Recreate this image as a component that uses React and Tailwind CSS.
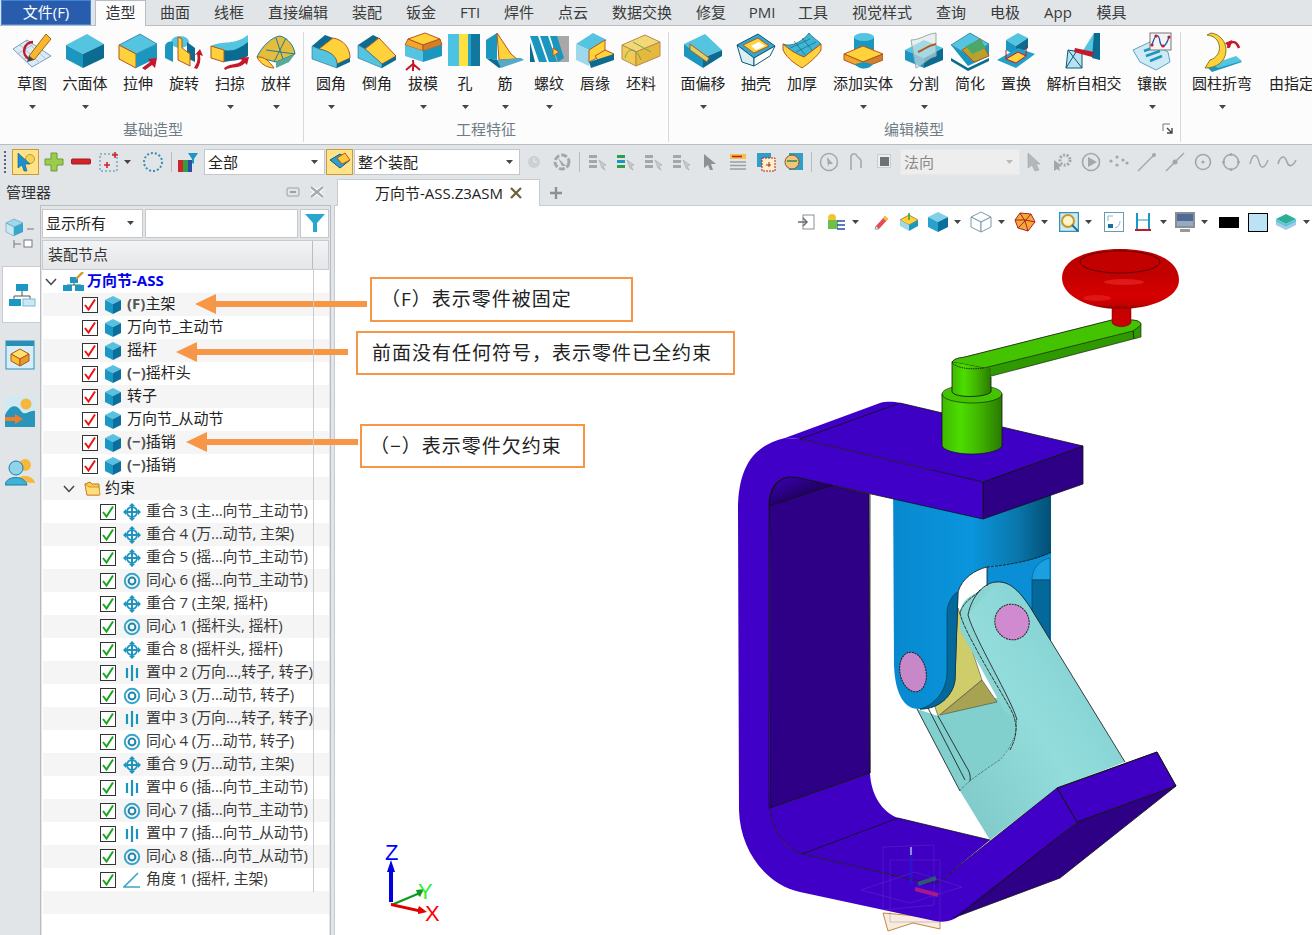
const C = { t: '#55c4e0', l: '#1b97bf', r: '#0b6b90', y: '#ffd23c', o: '#b5561c', e: '#0c5a78', red: '#c4182a' };

function Svg({ size = 40, children, className = '' }) {
  return (
    <svg viewBox={`0 0 ${size} ${size}`} width={size} height={size} className={`shrink-0 ${className}`}>
      {children}
    </svg>
  );
}

function Arrow({ d = 'M24 36 L32 30 L30 27 L39 26 L37 36 L34 33 L27 38 Z' }) {
  return <path d={d} fill={C.red} />;
}

const RIBBON_ICONS = {
  sketch: (
    <>
      <polygon points="1,17 15,8 39,24 20,35" fill="#dceaf5" stroke="#7b9db5" />
      <path d="M8 13 L28 31 M14 9 L34 27 M5 22 L22 12 M12 27 L30 17" stroke="#a9c2d4" fill="none" />
      <path d="M21 10 A9 9 0 0 0 17 27" stroke="#c4182a" strokeWidth="2.5" fill="none" />
      <polygon points="17,24 34,2 39,7 22,28" fill="#f9b62e" stroke="#a3650f" />
      <polygon points="17,24 22,28 15,30" fill="#444" />
    </>
  ),
  hex: (
    <>
      <polygon points="1,13 22,2 39,12 18,22" fill={C.t} />
      <polygon points="1,13 18,22 18,36 1,27" fill={C.l} />
      <polygon points="18,22 39,12 39,26 18,36" fill={C.r} />
    </>
  ),
  extrude: (
    <>
      <polygon points="1,13 22,2 39,12 18,22" fill={C.t} stroke={C.e} strokeWidth=".6" />
      <polygon points="1,13 18,22 18,36 1,27" fill={C.y} stroke={C.o} />
      <polygon points="18,22 39,12 39,26 18,36" fill={C.l} />
      <Arrow />
    </>
  ),
  revolve: (
    <>
      <ellipse cx="16" cy="10" rx="9" ry="6" fill={C.t} />
      <path d="M1 15 C1 9 8 9 9 10 L9 30 L1 26 Z" fill={C.l} />
      <path d="M23 10 L31 16 L31 30 L23 26 Z" fill={C.r} />
      <polygon points="14,5 18,7 18,16 26,22 26,34 14,28" fill={C.y} stroke={C.o} />
      <path d="M30 36 C34 30 34 26 33 22 L30 24 L36 17 L39 24 L36 23 C37 28 36 33 33 37 Z" fill={C.red} />
    </>
  ),
  sweep: (
    <>
      <path d="M1 14 C12 8 24 14 38 3 L38 17 C28 26 12 20 8 24 Z" fill={C.t} />
      <path d="M14 18 C24 20 30 16 38 10 L38 24 C28 30 22 28 14 30 Z" fill={C.r} />
      <polygon points="1,14 14,18 14,30 1,26" fill={C.y} stroke={C.o} />
      <path d="M14 36 C22 30 28 34 32 28 L29 26 L39 25 L37 33 L35 31 C30 37 22 34 15 38 Z" fill={C.red} />
    </>
  ),
  loft: (
    <>
      <path d="M1 25 C6 14 16 5 24 4 C32 6 38 14 39 22 L20 30 Z" fill="#e5bd3c" stroke="#1c7b9e" />
      <path d="M1 25 C8 24 14 30 18 36 C12 36 4 32 1 25 Z" fill={C.y} stroke={C.o} />
      <path d="M10 18 L39 22 M20 6 L28 30 M30 6 L18 30" stroke="#1c7b9e" fill="none" />
      <path d="M20 30 L39 22 L33 30 L20 36 Z" fill="#55aa9a" />
    </>
  ),
  fillet: (
    <>
      <path d="M1 14 L14 3 L22 6 L8 17 Z" fill={C.r} />
      <path d="M22 6 C33 8 39 16 39 26 L26 32 C26 24 18 19 8 17 Z" fill={C.y} stroke={C.o} />
      <path d="M1 14 L8 17 C18 19 26 24 26 32 L26 36 L1 27 Z" fill={C.t} stroke={C.e} strokeWidth=".5" />
      <polygon points="26,32 39,26 39,30 26,36" fill={C.r} />
    </>
  ),
  chamfer: (
    <>
      <polygon points="1,13 16,3 22,6 8,17" fill={C.r} />
      <polygon points="22,6 39,24 25,32 8,17" fill={C.y} stroke={C.o} />
      <polygon points="1,13 8,17 25,32 25,36 1,26" fill={C.t} stroke={C.e} strokeWidth=".5" />
      <polygon points="25,32 39,24 39,28 25,36" fill={C.r} />
    </>
  ),
  draft: (
    <>
      <polygon points="5,7 22,1 37,7 20,13" fill={C.y} stroke={C.o} />
      <polygon points="5,7 20,13 20,19 2,13" fill="#f0a52c" stroke={C.o} />
      <polygon points="20,13 37,7 39,13 20,19" fill="#d08028" stroke={C.o} />
      <polygon points="2,13 20,19 20,30 2,24" fill={C.t} />
      <polygon points="20,19 39,13 39,24 20,30" fill={C.l} />
      <path d="M10 39 L10 36 C11 32 10 30 10 28 M10 32 L3 38 M10 32 L17 38" stroke={C.red} strokeWidth="2" fill="none" />
    </>
  ),
  hole: (
    <>
      <rect x="3" y="2" width="32" height="32" rx="1" fill="#22a5d0" />
      <rect x="3" y="2" width="12" height="32" fill="#4cc3e2" />
      <rect x="14" y="2" width="9" height="32" fill="#ffe03c" />
      <rect x="26" y="2" width="9" height="32" fill="#13769c" />
    </>
  ),
  rib: (
    <>
      <polygon points="1,8 12,1 12,28 1,26" fill={C.l} />
      <polygon points="1,26 12,28 36,26 14,36" fill={C.r} />
      <polygon points="12,1 26,22 32,27 14,28" fill={C.y} stroke={C.o} />
      <polygon points="12,28 36,26 39,28 16,36" fill="#55aac8" />
    </>
  ),
  thread: (
    <>
      <rect x="24" y="4" width="16" height="26" fill="#a8a8a8" />
      <path d="M1 4 L9 4 L18 30 L10 30 Z M11 4 L19 4 L28 30 L20 30 Z M21 4 L28 4 L35 26 L29 30 Z" fill={C.l} />
      <path d="M1 10 L6 30 L1 30 Z" fill={C.r} />
      <polygon points="24,16 30,20 24,24" fill={C.y} stroke={C.o} />
    </>
  ),
  lip: (
    <>
      <polygon points="1,12 18,1 32,8 14,18" fill={C.t} />
      <polygon points="1,12 14,18 14,34 1,28" fill="#9ed8ea" />
      <polygon points="14,18 30,8 30,22 14,30" fill={C.y} stroke={C.o} />
      <polygon points="20,24 30,18 39,22 25,31" fill={C.y} stroke={C.o} />
      <polygon points="14,30 39,22 39,28 16,36" fill={C.r} />
    </>
  ),
  stock: (
    <>
      <polygon points="1,13 24,3 39,10 15,20" fill="#f3d975" stroke="#b58a52" />
      <polygon points="1,13 15,20 15,34 1,27" fill="#f0cc55" stroke="#b58a52" />
      <polygon points="15,20 39,10 39,24 15,34" fill="#e5b93e" stroke="#b58a52" />
      <path d="M4 26 C6 16 15 14 20 28 M12 10 L30 20" stroke="#6da35a" fill="none" />
    </>
  ),
  offset: (
    <>
      <polygon points="1,12 22,2 39,18 20,26" fill={C.t} />
      <polygon points="1,12 1,24 20,36 20,26" fill={C.l} />
      <polygon points="20,26 39,18 39,24 20,36" fill={C.r} />
      <polygon points="7,12 26,26 24,30 7,18" fill="#d5d36a" stroke={C.o} />
    </>
  ),
  shell: (
    <>
      <polygon points="1,13 22,2 39,14 18,26" fill="#35a7cd" stroke={C.e} />
      <polygon points="7,13 22,6 33,14 18,21" fill={C.y} stroke={C.o} />
      <polygon points="15,14 23,10 29,14 20,18" fill="#fff" />
      <polygon points="1,13 18,26 18,34 6,30" fill="#dbeef6" stroke={C.e} />
      <polygon points="18,26 39,14 34,24 18,34" fill="#fff" stroke={C.e} />
    </>
  ),
  thicken: (
    <>
      <path d="M1 12 C10 16 22 8 27 1 C30 5 34 7 39 12 L22 25 C14 22 8 18 1 12 Z" fill="#3fb5d4" stroke={C.e} strokeWidth=".7" />
      <path d="M8 16 L28 7 M14 20 L34 10 M12 9 L24 24 M20 6 L30 18" stroke={C.e} strokeWidth=".6" fill="none" />
      <path d="M1 12 L1 18 C6 28 14 32 20 36 C26 32 36 24 39 18 L39 12 L22 25 C14 22 8 18 1 12 Z" fill={C.y} stroke={C.o} />
    </>
  ),
  addSolid: (
    <>
      <rect x="11" y="5" width="20" height="14" fill={C.l} />
      <ellipse cx="21" cy="5" rx="10" ry="4" fill={C.t} />
      <polygon points="1,22 20,14 40,22 20,30" fill={C.y} stroke={C.o} />
      <polygon points="1,22 20,30 20,36 1,28" fill="#f0a52c" stroke={C.o} />
      <polygon points="20,30 40,22 40,28 20,36" fill="#d08028" stroke={C.o} />
      <path d="M12 32 C16 38 26 38 30 32 L20 30 Z" fill={C.l} />
    </>
  ),
  split: (
    <>
      <polygon points="1,18 20,8 39,16 20,26" fill={C.t} />
      <polygon points="1,18 20,26 20,36 1,28" fill={C.l} />
      <polygon points="20,26 39,16 39,28 20,36" fill={C.r} />
      <path d="M7 8 C16 8 22 2 32 1 L32 24 C24 26 20 32 12 36 Z" fill="#d8e6e6" fillOpacity=".6" stroke="#9aa" />
      <path d="M14 20 C20 18 22 14 32 12" stroke={C.o} strokeWidth="2" fill="none" />
    </>
  ),
  simplify: (
    <>
      <polygon points="1,13 20,1 39,12 20,24" fill={C.t} stroke={C.e} strokeWidth=".6" />
      <polygon points="1,13 18,34 39,24 39,12 20,24" fill={C.l} />
      <polygon points="12,18 30,7 39,24 24,30" fill="#b9a22c" stroke={C.o} />
      <polygon points="16,14 30,7 36,16 22,22" fill="#4aa86a" />
      <polygon points="1,26 18,36 39,26 39,29 18,39 1,29" fill={C.r} />
    </>
  ),
  replace: (
    <>
      <polygon points="10,8 22,1 32,6 20,14" fill={C.t} />
      <polygon points="10,8 20,14 20,24 10,18" fill={C.l} />
      <polygon points="20,14 32,6 32,16 20,24" fill={C.r} />
      <polygon points="1,28 22,16 39,22 20,36" fill="#22a0c8" />
      <polygon points="10,27 22,20 30,24 20,31" fill={C.y} stroke={C.red} />
      <path d="M10 18 V27 M30 14 V24" stroke={C.red} fill="none" />
    </>
  ),
  selfInt: (
    <>
      <polygon points="4,18 18,20 18,36 2,36" fill="#b8e2f0" stroke={C.e} />
      <polygon points="18,20 30,1 36,1 36,28 18,20" fill={C.t} />
      <polygon points="30,1 36,1 36,28 28,26" fill={C.r} />
      <path d="M2 36 L12 20 M4 18 L18 36" stroke={C.e} fill="none" />
      <polygon points="11,16 30,20 28,25 10,20" fill={C.red} />
    </>
  ),
  inlay: (
    <>
      <path d="M1 18 L18 10 L36 20 L38 30 L24 38 L8 30 Z" fill="#cdeaf6" stroke="#5fa3c0" />
      <path d="M12 19 L26 14 M14 24 L28 19 M18 29 L30 24" stroke={C.l} strokeWidth="2.5" fill="none" />
      <rect x="18" y="1" width="21" height="17" fill="#f4f4f4" stroke="#777" />
      <path d="M20 13 C24 -1 27 3 28 10 C30 18 34 14 37 5" stroke="#2a4ea8" strokeWidth="1.3" fill="none" />
      <circle cx="20" cy="13" r="1.6" fill={C.red} /><circle cx="24" cy="4" r="1.6" fill={C.red} /><circle cx="31" cy="14" r="1.6" fill={C.red} /><circle cx="37" cy="5" r="1.6" fill={C.red} />
    </>
  ),
  bend: (
    <>
      <polygon points="6,36 34,26 40,30 10,40" fill={C.l} />
      <polygon points="10,32 34,24 40,29 16,36" fill={C.t} />
      <path d="M5 3 C20 4 22 24 8 28 L3 36 C14 36 24 30 24 18 C24 10 18 2 9 1 Z" fill={C.y} stroke="#8a7a1c" />
      <path d="M26 16 C28 8 34 8 37 16" stroke={C.red} strokeWidth="2.5" fill="none" />
      <polygon points="23,11 30,8 28,16" fill={C.red} />
    </>
  ),
};

const RIBBON = [
  {
    label: '基础造型', cls: 'pl-[9px] pr-[4px]', labelCls: 'pr-[2px]',
    items: [
      ['草图', 'sketch', 'w-[46px]', true], ['六面体', 'hex', 'w-[60px]', true], ['拉伸', 'extrude', 'w-[46px]'],
      ['旋转', 'revolve', 'w-[46px]'], ['扫掠', 'sweep', 'w-[46px]', true], ['放样', 'loft', 'w-[46px]', true],
    ],
  },
  {
    label: '工程特征', cls: 'pl-[4px] pr-[4px]', labelCls: '',
    items: [
      ['圆角', 'fillet', 'w-[46px]', true], ['倒角', 'chamfer', 'w-[46px]'], ['拔模', 'draft', 'w-[46px]', true],
      ['孔', 'hole', 'w-[38px]', true], ['筋', 'rib', 'w-[42px]', true], ['螺纹', 'thread', 'w-[46px]', true],
      ['唇缘', 'lip', 'w-[46px]'], ['坯料', 'stock', 'w-[46px]'],
    ],
  },
  {
    label: '编辑模型', cls: 'pl-[4px] pr-[5px]', labelCls: 'pr-[20px]', launcher: true,
    items: [
      ['面偏移', 'offset', 'w-[60px]', true], ['抽壳', 'shell', 'w-[46px]'], ['加厚', 'thicken', 'w-[46px]'],
      ['添加实体', 'addSolid', 'w-[76px]', true], ['分割', 'split', 'w-[46px]', true], ['简化', 'simplify', 'w-[46px]'],
      ['置换', 'replace', 'w-[46px]'], ['解析自相交', 'selfInt', 'w-[90px]'], ['镶嵌', 'inlay', 'w-[46px]', true],
    ],
  },
];

const TABS = [
  ['曲面', 'w-[54px]'], ['线框', 'w-[54px]'], ['直接编辑', 'w-[84px]'], ['装配', 'w-[54px]'], ['钣金', 'w-[54px]'],
  ['FTI', 'w-[44px]'], ['焊件', 'w-[54px]'], ['点云', 'w-[54px]'], ['数据交换', 'w-[84px]'], ['修复', 'w-[54px]'],
  ['PMI', 'w-[48px]'], ['工具', 'w-[54px]'], ['视觉样式', 'w-[84px]'], ['查询', 'w-[54px]'], ['电极', 'w-[54px]'],
  ['App', 'w-[52px]'], ['模具', 'w-[55px]'],
];

function Caret({ className = '' }) {
  return (
    <svg width="7" height="4" viewBox="0 0 7 4" className={`shrink-0 ${className}`}>
      <polygon points="0,0 7,0 3.5,4" fill="#454545" />
    </svg>
  );
}

function RibbonItem({ label, icon, w, caret }) {
  return (
    <div className={`${w} shrink-0 flex flex-col items-center pt-[6px]`}>
      <Svg>{RIBBON_ICONS[icon]}</Svg>
      <div className="mt-[1px] h-[20px] leading-[20px] whitespace-nowrap">{label}</div>
      {caret && <Caret className="mt-[12px]" />}
    </div>
  );
}

function Sep() {
  return <div className="w-px shrink-0 bg-[#d6d9db] mt-[6px] mb-[2px]" />;
}

function RibbonGroup({ group }) {
  return (
    <div className={`${group.cls} flex flex-col shrink-0`}>
      <div className="flex h-[92px]">
        {group.items.map(([l, ic, w, c]) => <RibbonItem key={l} label={l} icon={ic} w={w} caret={c} />)}
      </div>
      <div className={`${group.labelCls} relative h-[22px] leading-[22px] text-center text-[#6f7c86]`}>
        {group.label}
        {group.launcher && (
          <svg width="11" height="11" viewBox="0 0 11 11" className="absolute right-[2px] top-[5px]">
            <path d="M1 1 H8 M1 1 V8" stroke="#777" fill="none" />
            <path d="M5 5 L10 10 M10 5 V10 H5" stroke="#444" strokeWidth="1.4" fill="none" />
          </svg>
        )}
      </div>
    </div>
  );
}

function Tool({ children, className = '' }) {
  return <div className={`w-7 h-7 shrink-0 flex items-center justify-center ${className}`}>{children}</div>;
}

const gray = '#a3a7aa';

function GrayStack({ color = gray, arrow = '#c8cbcd' }) {
  return (
    <svg width="20" height="18" viewBox="0 0 20 18">
      <rect x="1" y="2" width="8" height="3" fill={color} /><rect x="1" y="7" width="8" height="3" fill={color === gray ? gray : '#1b97bf'} /><rect x="1" y="12" width="8" height="3" fill={color} />
      <path d="M11 7 L18 12 L15 13 L17 17 L14 15 Z" fill={arrow} stroke="#999" strokeWidth=".5" />
    </svg>
  );
}

function Combo({ text, w, disabled }) {
  return (
    <div className={`${w} h-[26px] shrink-0 border flex items-center pl-[3px] pr-[6px] ${disabled ? 'bg-[#eeeeee] border-[#e6e8ea] text-[#8a8a8a]' : 'bg-white border-[#c4c8cb]'}`}>
      <span className="flex-1 leading-[20px] pt-[1px]">{text}</span>
      <Caret className={disabled ? 'opacity-30' : ''} />
    </div>
  );
}

function ToolbarRow() {
  return (
    <div className="h-[33px] bg-[#e1e5e8] flex items-center pl-[4px] shrink-0">
      <div className="w-[3px] h-[22px] border-l-2 border-dotted border-[#56627a] mr-[5px]" />
      <div className="w-[27px] h-[26px] bg-[#ffe28a] border border-[#c89a3a] flex items-center justify-center">
        <svg width="20" height="20" viewBox="0 0 20 20">
          <circle cx="14" cy="7" r="4.5" fill="#f6d35a" stroke="#c09a2a" />
          <path d="M2 1 L14 12 L9 12 L11 19 L8 19 L6 13 L2 16 Z" fill="#1b8fd0" stroke="#0b5f8f" strokeWidth=".6" />
        </svg>
      </div>
      <Tool className="ml-[1px]">
        <svg width="20" height="20" viewBox="0 0 20 20"><path d="M7 1 H13 V7 H19 V13 H13 V19 H7 V13 H1 V7 H7 Z" fill="#9ccc4c" stroke="#6c9a30" /></svg>
      </Tool>
      <Tool className="-ml-[1px]">
        <svg width="20" height="8" viewBox="0 0 20 8"><rect x=".5" y="1" width="19" height="5" rx="1" fill="#d2232a" stroke="#a01a20" /></svg>
      </Tool>
      <Tool>
        <svg width="22" height="22" viewBox="0 0 22 22">
          <rect x="2" y="3" width="17" height="17" fill="none" stroke="#3a8fb0" strokeDasharray="2 2" />
          <path d="M9 11 V17 M6 14 H12 M17 1 V7 M14 4 H20" stroke="#d2232a" strokeWidth="1.6" />
        </svg>
      </Tool>
      <Caret className="ml-[1px]" />
      <Tool className="ml-[8px]">
        <svg width="22" height="22" viewBox="0 0 22 22"><circle cx="11" cy="11" r="9" fill="none" stroke="#3a8fb0" strokeWidth="2" strokeDasharray="2 2" /></svg>
      </Tool>
      <div className="w-px h-[20px] bg-[#b8bcc0] ml-[4px] mr-[2px]" />
      <Tool>
        <svg width="22" height="22" viewBox="0 0 22 22">
          <rect x="1" y="9" width="5" height="12" fill="#d2232a" /><rect x="6" y="9" width="5" height="12" fill="#2f9e44" /><rect x="11" y="9" width="4" height="12" fill="#2a4ea8" />
          <path d="M11 2 H21 L17 8 V13 L15 12 V8 Z" fill="#1b97c4" />
        </svg>
      </Tool>
      <Combo text="全部" w="w-[121px] ml-[2px]" />
      <div className="w-[27px] h-[26px] ml-[1px] bg-[#ffe28a] border border-[#c89a3a] flex items-center justify-center">
        <svg width="22" height="20" viewBox="0 0 22 20">
          <polygon points="1,8 11,2 21,8 11,16" fill="#2f9fc8" stroke="#0b5f8f" />
          <polygon points="8,6 16,1 21,8 13,12" fill="#ffc93c" stroke="#b5561c" />
        </svg>
      </div>
      <Combo text="整个装配" w="w-[166px] ml-[1px]" />
      <Tool>
        <svg width="14" height="14" viewBox="0 0 14 14"><circle cx="7" cy="7" r="6" fill="#cdd0d2" /><path d="M7 3 V7 H10" stroke="#eee" fill="none" /></svg>
      </Tool>
      <Tool>
        <svg width="20" height="20" viewBox="0 0 20 20"><circle cx="10" cy="10" r="7" fill="none" stroke={gray} strokeWidth="3" strokeDasharray="6 2" /><path d="M6 6 L14 14 L10 14" fill={gray} /></svg>
      </Tool>
      <div className="w-px h-[20px] bg-[#b8bcc0] ml-[3px] mr-[4px]" />
      <Tool><GrayStack /></Tool>
      <Tool><GrayStack color="#2f9e44" /></Tool>
      <Tool><GrayStack /></Tool>
      <Tool><GrayStack /></Tool>
      <Tool>
        <svg width="14" height="18" viewBox="0 0 14 18"><path d="M1 1 L13 11 L8 11 L10 17 L7 17 L5 12 L1 15 Z" fill="#8d9194" /></svg>
      </Tool>
      <Tool>
        <svg width="18" height="18" viewBox="0 0 18 18"><rect x="1" y="1" width="16" height="5" fill="#f2c04c" /><path d="M3 3.5 H13" stroke="#c4182a" strokeWidth="1.6" /><path d="M1 9 H17 M1 12.5 H17 M1 16 H17" stroke="#9a9fa3" strokeWidth="1.5" /></svg>
      </Tool>
      <Tool>
        <svg width="20" height="20" viewBox="0 0 20 20"><rect x="1" y="1" width="14" height="14" fill="#2f9fc8" /><rect x="6" y="6" width="13" height="13" fill="#fdf2c8" stroke="#c4182a" strokeDasharray="2 1" /><path d="M10 13 H15 M13 10 V15" stroke="#c4182a" /></svg>
      </Tool>
      <Tool>
        <svg width="20" height="20" viewBox="0 0 20 20"><rect x="5" y="1" width="14" height="17" fill="#2f9fc8" /><circle cx="8" cy="10" r="7" fill="#f2c481" stroke="#8a5a20" /><path d="M3 9 H13" stroke="#5a9a4a" strokeWidth="2" /></svg>
      </Tool>
      <div className="w-px h-[20px] bg-[#b8bcc0] ml-[3px] mr-[3px]" />
      <Tool>
        <svg width="20" height="20" viewBox="0 0 20 20"><circle cx="10" cy="10" r="8.5" fill="none" stroke={gray} strokeWidth="1.5" /><path d="M8 5 L14 12 L10 12 L9 15 Z" fill={gray} /></svg>
      </Tool>
      <Tool className="-ml-[1px]">
        <svg width="14" height="20" viewBox="0 0 14 20"><path d="M2 18 V5 C2 1 7 1 8 4 C9 6 12 6 12 9 V16" fill="none" stroke={gray} strokeWidth="1.5" /></svg>
      </Tool>
      <Tool className="ml-[1px]">
        <svg width="16" height="16" viewBox="0 0 16 16"><rect x=".5" y=".5" width="13" height="13" fill="#eee" stroke="#ccc" /><rect x="3" y="3" width="9" height="9" fill="#6e7275" /></svg>
      </Tool>
      <Combo text="法向" w="w-[120px] ml-[1px]" disabled />
      <Tool className="ml-[1px]">
        <svg width="16" height="20" viewBox="0 0 16 20"><path d="M1 1 L13 12 L9 12 L12 18 L8 19 L5 13 L1 16 Z" fill="#b4b8bb" stroke="#999" strokeWidth=".5" /></svg>
      </Tool>
      <Tool>
        <svg width="20" height="20" viewBox="0 0 20 20"><circle cx="12" cy="8" r="5" fill="none" stroke={gray} strokeWidth="3" strokeDasharray="2 1.5" /><path d="M1 8 L9 14 L6 15 L7 19 L4 17 L1 19 Z" fill={gray} /></svg>
      </Tool>
      <Tool>
        <svg width="20" height="20" viewBox="0 0 20 20"><circle cx="10" cy="10" r="8.5" fill="none" stroke={gray} strokeWidth="1.6" /><path d="M7 5 L16 10 L7 15 Z" fill={gray} /></svg>
      </Tool>
      <Tool>
        <svg width="20" height="14" viewBox="0 0 20 14" fill={gray}><circle cx="2" cy="6" r="1.6" /><circle cx="8" cy="2" r="1.6" /><circle cx="8" cy="10" r="1.6" /><circle cx="14" cy="5" r="1.6" /><circle cx="18" cy="8" r="1.6" /></svg>
      </Tool>
      <Tool>
        <svg width="20" height="20" viewBox="0 0 20 20"><path d="M1 19 L17 3" stroke={gray} strokeWidth="1.5" /><circle cx="17" cy="3" r="2" fill={gray} /></svg>
      </Tool>
      <Tool>
        <svg width="20" height="20" viewBox="0 0 20 20"><path d="M1 19 L19 1" stroke={gray} strokeWidth="1.5" /><circle cx="10" cy="10" r="2.5" fill={gray} /></svg>
      </Tool>
      <Tool>
        <svg width="18" height="18" viewBox="0 0 18 18"><circle cx="9" cy="9" r="7.5" fill="none" stroke={gray} strokeWidth="1.6" /><circle cx="9" cy="9" r="1.6" fill={gray} /></svg>
      </Tool>
      <Tool>
        <svg width="20" height="20" viewBox="0 0 20 20"><circle cx="10" cy="10" r="7.5" fill="none" stroke={gray} strokeWidth="1.6" /><g fill={gray}><circle cx="10" cy="2.5" r="1.5" /><circle cx="10" cy="17.5" r="1.5" /><circle cx="2.5" cy="10" r="1.5" /><circle cx="17.5" cy="10" r="1.5" /></g></svg>
      </Tool>
      <Tool>
        <svg width="20" height="20" viewBox="0 0 20 20"><path d="M1 12 C4 0 8 2 10 10 C12 18 16 16 19 8" fill="none" stroke={gray} strokeWidth="1.4" /></svg>
      </Tool>
      <Tool>
        <svg width="20" height="16" viewBox="0 0 20 16"><path d="M1 10 C4 0 8 2 10 8 C12 14 16 12 19 6" fill="none" stroke={gray} strokeWidth="1.6" /></svg>
      </Tool>
    </div>
  );
}

function MiniCube() {
  return (
    <svg width="18" height="18" viewBox="0 0 18 18" className="shrink-0">
      <polygon points="9,0 17,4 9,8 1,4" fill="#58c0e0" />
      <polygon points="1,4 9,8 9,18 1,14" fill="#1b97c4" />
      <polygon points="9,8 17,4 17,14 9,18" fill="#0b6f9e" />
    </svg>
  );
}

function Check({ color }) {
  return (
    <div className="w-4 h-4 shrink-0 border border-[#333] bg-white flex items-center justify-center">
      <svg width="14" height="14" viewBox="0 0 14 14">
        <path d="M2 7 L5.5 11.5 L12 1.5" fill="none" stroke={color} strokeWidth="2" />
      </svg>
    </div>
  );
}

const CONSTRAINT_ICONS = {
  coincide: (
    <>
      <circle cx="9" cy="9" r="5" fill="none" stroke="#1d94bd" strokeWidth="2" />
      <path d="M9 1 V17 M1 9 H17" stroke="#1d94bd" strokeWidth="2" />
      <path d="M9 0 L12 3 H6 Z M9 18 L12 15 H6 Z M0 9 L3 6 V12 Z M18 9 L15 6 V12 Z" fill="#1d94bd" />
    </>
  ),
  concentric: (
    <>
      <circle cx="9" cy="9" r="7.2" fill="none" stroke="#34a4c8" strokeWidth="2" />
      <circle cx="9" cy="9" r="3.4" fill="none" stroke="#1d84ad" strokeWidth="2" />
    </>
  ),
  center: <path d="M4 4 V14 M9 1 V17 M14 4 V14" stroke="#1d94bd" strokeWidth="2.2" />,
  angle: <path d="M15 2 L1 16 H17" fill="none" stroke="#3aa6c8" strokeWidth="1.6" />,
};

function ConstraintIcon({ type }) {
  return <svg width="18" height="18" viewBox="0 0 18 18" className="shrink-0">{CONSTRAINT_ICONS[type]}</svg>;
}

const PARTS = [
  ['(F)', '主架'], ['', '万向节_主动节'], ['', '摇杆'], ['(−)', '摇杆头'], ['', '转子'],
  ['', '万向节_从动节'], ['(−)', '插销'], ['(−)', '插销'],
];

const CONSTRAINTS = [
  ['coincide', '重合 3 (主...向节_主动节)'], ['coincide', '重合 4 (万...动节, 主架)'], ['coincide', '重合 5 (摇...向节_主动节)'],
  ['concentric', '同心 6 (摇...向节_主动节)'], ['coincide', '重合 7 (主架, 摇杆)'], ['concentric', '同心 1 (摇杆头, 摇杆)'],
  ['coincide', '重合 8 (摇杆头, 摇杆)'], ['center', '置中 2 (万向...,转子, 转子)'], ['concentric', '同心 3 (万...动节, 转子)'],
  ['center', '置中 3 (万向...,转子, 转子)'], ['concentric', '同心 4 (万...动节, 转子)'], ['coincide', '重合 9 (万...动节, 主架)'],
  ['center', '置中 6 (插...向节_主动节)'], ['concentric', '同心 7 (插...向节_主动节)'], ['center', '置中 7 (插...向节_从动节)'],
  ['concentric', '同心 8 (插...向节_从动节)'], ['angle', '角度 1 (摇杆, 主架)'],
];

function Row({ index, children }) {
  return (
    <div className={`h-[23px] flex items-center leading-[23px] whitespace-nowrap ${index % 2 === 1 ? 'bg-[#f5f5f5]' : 'bg-white'}`}>
      {children}
    </div>
  );
}

function Chevron({ className = '' }) {
  return (
    <svg width="12" height="8" viewBox="0 0 12 8" className={`shrink-0 ${className}`}>
      <path d="M1 1 L6 6.5 L11 1" fill="none" stroke="#444" strokeWidth="1.5" />
    </svg>
  );
}

function Tree() {
  return (
    <div className="relative flex-1 ml-[1px]">
      <div className="absolute left-[270px] top-0 h-[622px] w-px bg-[#c8ccd0] z-10" />
      <Row index={0}>
        <Chevron className="ml-[2px]" />
        <svg width="22" height="20" viewBox="0 0 22 20" className="ml-[6px] shrink-0">
          <rect x="7" y="5" width="8" height="6" fill="#1b97c4" /><path d="M11 11 V13 M4 13 H18" stroke="#555" fill="none" />
          <rect x="0" y="13" width="9" height="6" fill="#1b97c4" /><rect x="12" y="13" width="9" height="6" fill="#1b97c4" />
          <path d="M13 7 L20 0" stroke="#d09a2a" strokeWidth="2.4" />
        </svg>
        <span className="ml-[2px] pb-[2px] font-bold text-[#0000ee]">万向节-ASS</span>
      </Row>
      {PARTS.map(([prefix, name], i) => (
        <Row key={i} index={i + 1}>
          <div className="ml-[39px]"><Check color="#ee1111" /></div>
          <div className="ml-[6px]"><MiniCube /></div>
          <span className="ml-[5px] pb-[2px]">
            {prefix && <b className="text-[#555]">{prefix}</b>}{name}
          </span>
        </Row>
      ))}
      <Row index={9}>
        <Chevron className="ml-[20px]" />
        <svg width="17" height="15" viewBox="0 0 17 15" className="ml-[9px] shrink-0">
          <path d="M1 3 L6 1 L8 3 H15 V14 H3 Z" fill="#f9c94c" stroke="#c07a1c" />
          <path d="M1 3 L3 14 L16 14 L15 6 H5 Z" fill="#ffdd7a" stroke="#c07a1c" strokeWidth=".7" />
        </svg>
        <span className="ml-[4px] pb-[2px]">约束</span>
      </Row>
      {CONSTRAINTS.map(([type, text], i) => (
        <Row key={text} index={i + 10}>
          <div className="ml-[57px]"><Check color="#16a51f" /></div>
          <div className="ml-[7px]"><ConstraintIcon type={type} /></div>
          <span className="ml-[5px] pb-[2px] tracking-[-0.1px] text-[#3a3a3a]">{text}</span>
        </Row>
      ))}
      <Row index={27} />
    </div>
  );
}

function SideIcons() {
  return (
    <div className="w-[40px] shrink-0 bg-[#e1e5e8] flex flex-col items-center pt-[13px]">
      <svg width="30" height="32" viewBox="0 0 30 32">
        <polygon points="9,1 18,5 9,9 1,5" fill="#9fd8ec" stroke="#3a8fb0" strokeWidth=".5" />
        <polygon points="1,5 9,9 9,18 1,14" fill="#c8e8f4" stroke="#3a8fb0" strokeWidth=".5" />
        <polygon points="9,9 18,5 18,14 9,18" fill="#3aa6cc" />
        <path d="M22 11 H29 M9 22 V30 M9 26 H16" stroke="#777" />
        <rect x="19" y="22" width="8" height="7" fill="#fff" stroke="#777" />
      </svg>
      <div className="self-start ml-[2px] mt-[16px] w-[39px] h-[57px] bg-white border border-r-0 border-[#c8ccd0] flex items-center justify-center">
        <svg width="28" height="24" viewBox="0 0 28 24">
          <rect x="8" y="1" width="12" height="7" fill="#1b97c4" /><path d="M14 8 V13 M6 13 H22 M6 13 V16 M22 13 V16" stroke="#555" fill="none" />
          <rect x="1" y="16" width="12" height="7" fill="#1b97c4" /><rect x="15" y="16" width="12" height="7" fill="#cde8f4" stroke="#7fb8d0" />
        </svg>
      </div>
      <svg width="30" height="30" viewBox="0 0 30 30" className="mt-[17px]">
        <rect x="1" y="1" width="28" height="28" fill="#d6eefa" stroke="#2a8fb8" />
        <rect x="1" y="1" width="28" height="5" fill="#2a8fb8" />
        <polygon points="6,14 15,9 24,14 15,19" fill="#ffe06a" stroke="#b5561c" />
        <polygon points="6,14 15,19 15,26 6,21" fill="#f8c030" stroke="#b5561c" />
        <polygon points="15,19 24,14 24,21 15,26" fill="#e89a28" stroke="#b5561c" />
      </svg>
      <svg width="30" height="30" viewBox="0 0 30 30" className="mt-[27px]">
        <rect x="0" y="0" width="30" height="30" fill="#cfeaf4" />
        <path d="M0 18 C6 6 12 8 16 14 C20 20 25 12 30 14 V30 H0 Z" fill="#2a95bb" />
        <circle cx="21" cy="7" r="5.5" fill="#f6b73c" />
        <path d="M0 20 H10 V17 L18 22 L10 27 V24 H0 Z" fill="#ef7d2e" />
      </svg>
      <svg width="30" height="28" viewBox="0 0 30 28" className="mt-[31px]">
        <circle cx="20" cy="7" r="6" fill="#f6b73c" /><path d="M12 24 C12 16 28 16 30 25 Z" fill="#f6b73c" />
        <circle cx="11" cy="10" r="7" fill="#8fd4ea" stroke="#1b7fa6" />
        <path d="M0 27 C1 17 20 17 22 27 Z" fill="#3fb2d6" stroke="#1b7fa6" />
      </svg>
    </div>
  );
}

function ManagerPanel() {
  return (
    <div className="w-[335px] shrink-0 flex flex-col">
      <div className="h-[27px] flex items-center pl-[6px] bg-[#e1e5e8]">
        <span className="leading-[20px] text-[#333]">管理器</span>
        <svg width="14" height="10" viewBox="0 0 14 10" className="ml-[235px]">
          <rect x="1" y="1" width="12" height="8" rx="1" fill="none" stroke="#9aa0a5" /><rect x="4" y="4" width="6" height="2" fill="#9aa0a5" />
        </svg>
        <svg width="16" height="12" viewBox="0 0 16 12" className="ml-[9px]">
          <path d="M2 1 L14 11 M14 1 L2 11" stroke="#fff" strokeWidth="4.5" /><path d="M2 1 L14 11 M14 1 L2 11" stroke="#a8adb1" strokeWidth="2.4" />
        </svg>
      </div>
      <div className="flex flex-1 min-h-0">
        <SideIcons />
        <div className="w-[291px] shrink-0 border-x border-t border-[#b9bdc1] bg-[#e1e5e8] flex flex-col">
          <div className="h-[34px] shrink-0 flex items-center gap-[2px] pl-[1px] pr-[1px] pb-[1px] pt-[1px]">
            <div className="w-[101px] h-[29px] bg-white border border-[#c4c8cb] flex items-center pl-[3px] pr-[8px]">
              <span className="flex-1 leading-[20px]">显示所有</span>
              <Caret />
            </div>
            <div className="w-[153px] h-[29px] bg-white border border-[#c4c8cb]" />
            <div className="w-[29px] h-[29px] bg-white border border-[#c4c8cb] flex items-center justify-center">
              <svg width="20" height="20" viewBox="0 0 20 20"><path d="M0 1 H20 L12 10 V19 H8 V10 Z" fill="#27a7d0" /></svg>
            </div>
          </div>
          <div className="h-[30px] shrink-0 mx-[1px] flex border border-[#c8ccd0] bg-gradient-to-b from-[#f2f3f4] to-[#e4e6e8]">
            <div className="w-[270px] pl-[5px] border-r border-[#b9bdc1] leading-[26px] text-[#333]">装配节点</div>
          </div>
          <div className="flex flex-col flex-1 mr-[1px] bg-white ml-[1px]">
            <Tree />
          </div>
        </div>
        <div className="w-[4px] bg-[#e1e5e8] border-r border-[#c8ccd0]" />
      </div>
    </div>
  );
}

function ViewTools() {
  return (
    <div className="absolute left-[457px] top-[2px] flex items-center">
      <Tool>
        <svg width="18" height="18" viewBox="0 0 18 18"><rect x="6" y="2" width="11" height="14" fill="#fff" stroke="#8a8f93" /><path d="M1 9 H10 M6 5 L10 9 L6 13" stroke="#6a6f73" strokeWidth="1.5" fill="none" /></svg>
      </Tool>
      <Tool className="ml-[2px]">
        <svg width="20" height="20" viewBox="0 0 20 20"><circle cx="6" cy="6" r="4" fill="#f4c430" /><rect x="2" y="8" width="10" height="9" fill="#6ebf4a" /><path d="M11 9 H19 M11 13 H19 M11 17 H19" stroke="#2a4ea8" strokeWidth="1.5" /></svg>
      </Tool>
      <Caret className="ml-[2px]" />
      <Tool className="ml-[8px]">
        <svg width="16" height="16" viewBox="0 0 16 16"><path d="M3 12 L12 2 L15 5 L6 15 Z" fill="#e84a5a" /><path d="M3 12 L6 15 L2 15 Z" fill="#eee" stroke="#999" /><path d="M12 2 L15 5 L13 7 L10 4 Z" fill="#f4c430" /></svg>
      </Tool>
      <Tool>
        <svg width="20" height="20" viewBox="0 0 20 20"><polygon points="1,8 10,3 19,8 10,13" fill="#ffd23c" stroke="#b58a1c" /><polygon points="1,8 10,13 10,19 1,14" fill="#9ed8ea" /><polygon points="10,13 19,8 19,14 10,19" fill="#1b97c4" /><path d="M10 8 V1" stroke="#2f9e44" strokeWidth="1.5" /></svg>
      </Tool>
      <Tool className="ml-[1px]">
        <svg width="22" height="22" viewBox="0 0 22 22"><polygon points="1,6 11,1 21,6 11,11" fill="#7fd0e8" /><polygon points="1,6 11,11 11,21 1,16" fill="#2aa0cc" /><polygon points="11,11 21,6 21,16 11,21" fill="#0b6f9e" /></svg>
      </Tool>
      <Caret className="ml-[2px]" />
      <Tool className="ml-[6px]">
        <svg width="22" height="22" viewBox="0 0 22 22" fill="#fff" stroke="#7a9aae"><polygon points="1,6 11,1 21,6 11,11" /><polygon points="1,6 11,11 11,21 1,16" /><polygon points="11,11 21,6 21,16 11,21" /></svg>
      </Tool>
      <Caret className="ml-[3px]" />
      <Tool className="ml-[6px]">
        <svg width="22" height="20" viewBox="0 0 22 20"><polygon points="6,1 17,2 21,10 14,19 4,16 1,8" fill="#f2a93c" stroke="#b02020" /><path d="M6 1 L11 9 L17 2 M1 8 H11 L21 10 M11 9 L4 16 M11 9 L14 19" stroke="#b02020" fill="none" /></svg>
      </Tool>
      <Caret className="ml-[2px]" />
      <Tool className="ml-[7px]">
        <svg width="20" height="20" viewBox="0 0 20 20"><rect x=".5" y=".5" width="19" height="19" fill="#cfeaf4" stroke="#2a95bb" strokeWidth="1.5" /><circle cx="9" cy="9" r="6" fill="#fff3c8" stroke="#c09a2a" strokeWidth="2" /><path d="M13 13 L19 19" stroke="#2a6a8a" strokeWidth="2" /></svg>
      </Tool>
      <Caret className="ml-[2px]" />
      <Tool className="ml-[8px]">
        <svg width="20" height="20" viewBox="0 0 20 20"><rect x=".5" y=".5" width="19" height="19" fill="#fff" stroke="#6a9ab0" /><rect x="4" y="12" width="5" height="4" fill="#1b6f9e" /><path d="M4 9 V4 H9 M16 9 C16 13 14 15 11 16" stroke="#8ab8cc" fill="none" /></svg>
      </Tool>
      <Tool className="ml-[2px]">
        <svg width="20" height="20" viewBox="0 0 20 20"><path d="M3 1 V19 M15 1 V19" stroke="#1b97c4" strokeWidth="2" /><path d="M4 8 H14" stroke="#1b97c4" /><path d="M1 18 H17" stroke="#c4182a" strokeWidth="2" /></svg>
      </Tool>
      <Caret className="ml-[2px]" />
      <Tool className="ml-[4px]">
        <svg width="22" height="22" viewBox="0 0 22 22"><rect x="1" y="1" width="20" height="16" fill="#8a8f93" /><rect x="3" y="3" width="16" height="12" fill="#4f6a94" /><path d="M3 10 H19 V15 H3 Z" fill="#98a8c0" /><rect x="6" y="18" width="10" height="3" fill="#999" /></svg>
      </Tool>
      <Caret className="ml-[2px]" />
      <Tool className="ml-[7px]"><div className="w-5 h-[11px] bg-black" /></Tool>
      <Tool className="ml-[1px]"><div className="w-5 h-[19px] bg-[#bce3f5] border border-black" /></Tool>
      <Tool>
        <svg width="22" height="18" viewBox="0 0 22 18"><polygon points="1,9 11,14 21,9 21,12 11,17 1,12" fill="#a8c8e8" /><polygon points="1,6 11,11 21,6 11,1" fill="#2fae96" /><polygon points="1,6 11,11 21,6 21,9 11,14 1,9" fill="#62c3dc" /></svg>
      </Tool>
      <Caret className="ml-[3px]" />
    </div>
  );
}

function Model() {
  const edge = { stroke: '#111', strokeWidth: 0.8, fill: 'none' };
  return (
    <svg viewBox="335 206 977 729" className="absolute inset-0 w-full h-full">
      <defs>
        <linearGradient id="blueShaft" x1="0" x2="1" y1="0" y2="0">
          <stop offset="0" stopColor="#0789cf" /><stop offset=".5" stopColor="#0a95dc" /><stop offset=".78" stopColor="#0a78ad" /><stop offset="1" stopColor="#024f74" />
        </linearGradient>
        <linearGradient id="tealTube" x1="0" y1="1" x2="1" y2="0">
          <stop offset="0" stopColor="#7dc8c6" /><stop offset=".45" stopColor="#93dcdc" /><stop offset=".75" stopColor="#84d2d2" /><stop offset="1" stopColor="#8fd8d8" />
        </linearGradient>
        <linearGradient id="greenCyl" x1="0" x2="1" y1="0" y2="0">
          <stop offset="0" stopColor="#3fb800" /><stop offset=".3" stopColor="#4cdc00" /><stop offset=".6" stopColor="#42b800" /><stop offset="1" stopColor="#2a7a00" />
        </linearGradient>
        <linearGradient id="knob" x1="0" x2="0" y1="0" y2="1">
          <stop offset="0" stopColor="#bc0000" /><stop offset=".45" stopColor="#c40000" /><stop offset=".75" stopColor="#d60000" /><stop offset=".92" stopColor="#c80000" /><stop offset="1" stopColor="#8a0000" />
        </linearGradient>
        <linearGradient id="arcShade" x1="0" x2="1" y1="0" y2="1">
          <stop offset="0" stopColor="#3d00bf" /><stop offset=".55" stopColor="#220066" /><stop offset="1" stopColor="#2d0085" />
        </linearGradient>
      </defs>

      {/* origin plane poking out under the frame */}
      <polygon points="883,913 888,931 913,923 940,929 940,918" fill="#f8ecdd" stroke="#c08a40" />

      {/* universal joint, back to front */}
      <path d="M987 567 C1010 565 1035 560 1051 552 V650 H1000 L987 600 Z" fill="#0a8fd6" />
      <path d="M1032 580 C1032 568 1040 560 1050 558 V580 Z" fill="#1aa0e0" stroke="#05608f" strokeWidth=".7" />
      <rect x="1032" y="580" width="18" height="60" fill="#05689a" stroke="#033f5f" strokeWidth=".7" />

      <path d="M917 709 L938 716 L1005 695 L1017 720 C1018 735 1010 750 1000 760 C990 770 965 790 960 791 Z" fill="#82d0ce" />
      <path d="M917 709 L960 791 M927 706 L965 780 M938 716 L967 768 C970 772 972 780 968 786" {...edge} />
      <path d="M960 791 C966 783 978 775 1000 760 C1010 750 1018 735 1017 720" {...edge} strokeDasharray="3 1" />

      <polygon points="958,608 982,680 938,716 935,707 953,687" fill="#cfcd6a" stroke="#333" strokeWidth=".5" />
      <polygon points="982,680 997,702 940,715" fill="#a8a352" stroke="#333" strokeWidth=".5" />

      <path d="M968 615 C970 595 985 582 997 582 C1010 581 1020 592 1030 607 L1125 762 L1057 788 L990 840 L960 791 C966 783 978 775 1000 760 C1010 750 1018 735 1017 720 C1012 700 975 640 968 615 Z" fill="url(#tealTube)" />
      <path d="M960 612 C962 600 970 596 978 592 L997 582 L968 615 C975 640 1012 700 1017 720 L1005 712 L960 630 Z" fill="#8ad4d2" />
      <path d="M968 615 C972 595 985 582 997 582 C1010 581 1020 592 1030 607 L1125 762" {...edge} />
      <path d="M960 612 C966 598 975 597 980 590 M960 612 C960 625 1000 690 1010 708 C1018 722 1018 735 1010 750" {...edge} strokeDasharray="4 .8" />
      <path d="M968 615 C975 640 1012 700 1017 720" {...edge} />
      <ellipse cx="1012" cy="622" rx="17" ry="18" transform="rotate(-25 1012 622)" fill="#d08ad0" stroke="#222" strokeDasharray="2 .8" />

      <path d="M893 470 H1051 V553 C1030 562 1010 565 987 567 C975 570 962 578 958 592 L955 680 C953 695 940 709 920 709 C905 710 895 695 894 665 Z" fill="url(#blueShaft)" />
      <path d="M987 567 C975 570 962 578 958 592 L955 680 C953 695 940 709 920 709" {...edge} />
      <path d="M958 592 C952 594 947 605 947 612 V672 C947 690 935 705 920 709 C940 709 953 695 955 680 Z" fill="#05689a" stroke="#033f5f" strokeWidth=".7" />
      <path d="M987 567 C1010 565 1035 560 1051 552" {...edge} strokeDasharray="3 1" />
      <path d="M987 567 V586" {...edge} />
      <ellipse cx="913" cy="672" rx="13" ry="20" transform="rotate(-12 913 672)" fill="#c688c8" stroke="#222" strokeDasharray="2 .8" />

      {/* clamp frame */}
      <polygon points="983,482 1083,446 1083,484 983,519" fill="#2d0085" stroke="#111" strokeWidth=".8" />
      <path d="M769 505 C769 485 780 473 800 478 L869 494 L870 773 L770 808 Z" fill="#2d0085" stroke="#111" strokeWidth=".8" />
      <path d="M769 506 C770 485 782 473 800 478 L833 485 Z" fill="url(#arcShade)" stroke="#111" strokeWidth=".8" />
      <path d="M785 438 L880 403 C888 401 895 402 900 403 L1083 446 L983 482 L800 439 Z" fill="#3e00c4" />
      <path d="M738 510 C738 465 755 445 785 438 L800 439 L983 482 L983 519 L800 478 C780 473 769 485 769 505 L770 808 C772 830 785 850 802 854 L927 883 C937 884 945 880 950 873 L1057 788 L1077 822 L960 915 C953 921 945 923 935 921 L800 892 C765 884 740 850 739 810 Z" fill="#4000c8" />
      <path d="M770 808 L870 773 C871 795 882 812 898 818 L990 840 L950 873 C945 880 937 884 927 883 L802 854 C785 850 772 830 770 808 Z" fill="#3f00c4" />
      <polygon points="1057,788 1157,752 1176,786 1077,822" fill="#3f00c4" stroke="#111" strokeWidth=".8" />
      <path d="M1077 822 L1176 786 L1060 878 L953 918 Z" fill="#2d0085" />
      <path d="M800 439 L983 482 L1083 446 L900 403 M800 439 L900 403 M983 482 V519 M769 505 V808 M770 808 L870 773 V494 M802 854 L898 818 L990 840 M802 854 L927 883 C937 884 945 880 950 873 L1057 788 L1077 822 L960 915 M1077 822 L1176 786 L1157 752 L1057 788 M1176 786 L1060 878 L953 918 M769 505 C769 485 780 473 800 478 L983 519 M770 808 C772 830 785 850 802 854" {...edge} />

      {/* faint origin triad on the frame */}
      <g fill="none" stroke="#7a4ac0" strokeWidth=".5" opacity=".6">
        <polygon points="883,847 934,845 934,905 883,910" />
        <polygon points="890,860 940,860 940,922 890,922" />
        <polygon points="861,890 915,872 962,887 910,903" />
      </g>
      <path d="M911 848 V884" stroke="#2020d0" strokeWidth="3" opacity=".6" />
      <path d="M911 847 V855" stroke="#fff" strokeWidth="1" />
      <path d="M915 889 L938 895" stroke="#c02080" strokeWidth="4" opacity=".8" />
      <path d="M918 884 L936 878" stroke="#2f6a6a" strokeWidth="4" opacity=".8" />

      {/* crank */}
      <path d="M952 362 C955 358 960 358 965 357 L1112 320 H1130 C1138 320 1141 322 1141 325 V337 L984 378 V368 Z" fill="#2f9a00" stroke="#111" strokeWidth=".6" />
      <path d="M952 362 C955 358 960 358 965 357 L1112 320 H1130 C1138 320 1141 322 1141 325 L1133 331 L984 368 Z" fill="#44c400" stroke="#111" strokeWidth=".6" />
      <path d="M1133 331 L1134 339" {...edge} />
      <ellipse cx="972" cy="445" rx="30" ry="9" fill="url(#greenCyl)" stroke="#111" strokeWidth=".6" />
      <rect x="942" y="394" width="60" height="51" fill="url(#greenCyl)" />
      <ellipse cx="972" cy="394" rx="30" ry="9" fill="#44c400" stroke="#111" strokeWidth=".6" />
      <path d="M942 394 V445 M1002 394 V445" {...edge} />
      <path d="M952 362 L984 368 L991 368 V392 C985 398 955 398 952 392 Z" fill="url(#greenCyl)" />
      <path d="M952 362 V392 C955 398 985 398 991 392 V377" {...edge} />
      <path d="M952 362 C955 368 970 370 984 368" {...edge} strokeDasharray="1.5 .8" />

      <path d="M1112 305 H1131 V323 C1127 328 1116 328 1112 323 Z" fill="#c80000" stroke="#600" strokeWidth=".5" />
      <path d="M1062 278 C1062 258 1090 249 1120 249 C1150 249 1179 258 1179 280 C1179 298 1150 309 1120 309 C1088 309 1062 296 1062 278 Z" fill="url(#knob)" />
      <ellipse cx="1120" cy="262" rx="40" ry="11" fill="#c20000" stroke="#300" strokeWidth=".7" />
      <ellipse cx="1124" cy="282" rx="20" ry="3" fill="#ee3030" opacity=".55" />
      <ellipse cx="1097" cy="298" rx="14" ry="3" fill="#ee3030" opacity=".45" />

      {/* triad in the corner */}
      <path d="M391 860 L395 872 H393 V902 H389 V872 H387 Z" fill="#0000e0" />
      <path d="M391 904 L417 893 L416 890 L424 889 L420 897 L418 895 L392 906 Z" fill="#0e9a1e" />
      <path d="M391 903 L418 909 L419 906 L427 912 L418 914 L418 912 L391 906 Z" fill="#e00000" />
      <g fontSize="22" fontFamily="'Liberation Sans', sans-serif">
        <text x="385" y="860" fill="#0000ff">Z</text>
        <text x="418" y="899" fill="#33ee33">Y</text>
        <text x="425" y="921" fill="#ff0000">X</text>
      </g>
    </svg>
  );
}

function Note({ className, children }) {
  return (
    <div className={`absolute border-2 border-[#f79646] bg-white flex items-center text-[19px] tracking-[1px] text-[#222] whitespace-nowrap ${className}`}>
      {children}
    </div>
  );
}

function NoteArrow({ className }) {
  return (
    <svg width="172" height="20" viewBox="0 0 172 20" className={`absolute ${className}`}>
      <polygon points="0,10 21,0 21,7 172,7 172,13 21,13 21,20" fill="#f79646" />
    </svg>
  );
}

export default function App() {
  return (
    <div className="relative w-[1312px] h-[935px] overflow-hidden flex flex-col bg-white text-[15px] text-[#222] font-['Open_Sans','Noto_Sans_CJK_SC',sans-serif]">
      {/* tab strip */}
      <div className="h-[26px] shrink-0 bg-[#e1e5e8] border-b border-[#b9bdc1] flex">
        <div className="ml-[1px] w-[90px] h-[25px] bg-[#2a5cad] border border-[#3f86d6] text-white flex items-center justify-center">文件(F)</div>
        <div className="ml-[4px] mr-[2px] w-[51px] h-[26px] pb-[2px] bg-[#fcfcfc] border-x border-t border-[#b9bdc1] flex items-center justify-center text-[#333]">造型</div>
        {TABS.map(([t, w]) => (
          <div key={t} className={`${w} h-[25px] pb-[1px] flex items-center justify-center text-[#3a3a3a]`}>{t}</div>
        ))}
      </div>

      {/* ribbon */}
      <div className="h-[119px] shrink-0 bg-[#fcfcfc] border-b border-[#b9bdc1] flex overflow-hidden">
        {RIBBON.map((g) => (
          <div key={g.label} className="flex shrink-0">
            <RibbonGroup group={g} />
            <Sep />
          </div>
        ))}
        <div className="pl-[3px] flex shrink-0">
          <RibbonItem label="圆柱折弯" icon="bend" w="w-[76px]" caret />
          <div className="w-[52px] shrink-0 pt-[47px] pl-[9px] leading-[20px] whitespace-nowrap">由指定</div>
        </div>
      </div>

      <ToolbarRow />

      <div className="flex flex-1 min-h-0">
        <ManagerPanel />
        <div className="flex-1 flex flex-col min-w-0">
          <div className="h-[28px] shrink-0 bg-[#e1e5e8] border-b border-[#c8ccd0] flex items-end pl-[2px]">
            <div className="w-[203px] h-[27px] -mb-px bg-white border-x border-t border-[#c8ccd0] flex items-center">
              <span className="ml-[37px] leading-[20px]">万向节-ASS.Z3ASM</span>
              <svg width="12" height="12" viewBox="0 0 12 12" className="ml-[7px]"><path d="M1 1 L11 11 M11 1 L1 11" stroke="#6b5f3c" strokeWidth="2.2" /></svg>
            </div>
            <svg width="14" height="14" viewBox="0 0 14 14" className="ml-[9px] mb-[5px]"><path d="M7 1 V13 M1 7 H13" stroke="#8d9194" strokeWidth="2.4" /></svg>
          </div>
          <div className="relative flex-1 bg-white">
            <Model />
            <ViewTools />
          </div>
        </div>
      </div>

      {/* annotations */}
      <NoteArrow className="left-[195px] top-[294px]" />
      <NoteArrow className="left-[176px] top-[342px]" />
      <NoteArrow className="left-[186px] top-[432px]" />
      <Note className="left-[370px] top-[277px] w-[263px] h-[45px] pl-[9px]">（F）表示零件被固定</Note>
      <Note className="left-[356px] top-[331px] w-[379px] h-[44px] pl-[14px]">前面没有任何符号，表示零件已全约束</Note>
      <Note className="left-[360px] top-[424px] w-[225px] h-[44px] pl-[8px]">（−）表示零件欠约束</Note>
    </div>
  );
}
